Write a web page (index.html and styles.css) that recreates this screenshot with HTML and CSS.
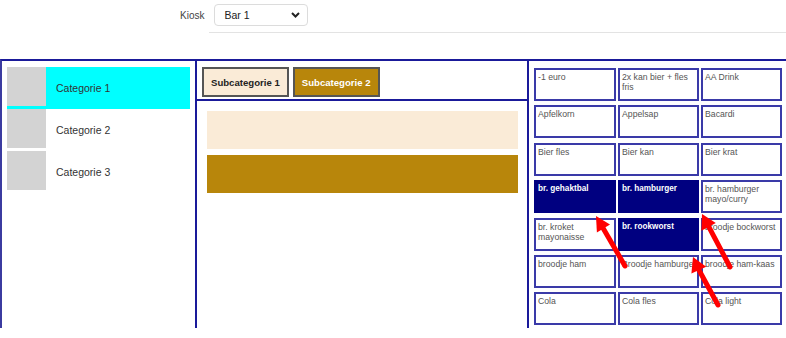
FILE: index.html
```html
<!DOCTYPE html>
<html lang="nl">
<head>
  <meta charset="UTF-8" />
  <title>Kassa</title>
  <link rel="stylesheet" href="styles.css">
</head>
<body>

<div class="topbar">
  <span class="kiosk-label">Kiosk</span>
  <div class="kiosk-select">
    <span>Bar 1</span>
    <svg width="9" height="6" viewBox="0 0 9 6"><path d="M1 1 L4.5 4.5 L8 1" fill="none" stroke="#222" stroke-width="2"/></svg>
  </div>
</div>
<div class="rule"></div>

<main class="frame">
  <aside class="categories">
    <div class="cat active"><div class="thumb"></div><span>Categorie 1</span></div>
    <div class="cat"><div class="thumb"></div><span>Categorie 2</span></div>
    <div class="cat"><div class="thumb"></div><span>Categorie 3</span></div>
  </aside>

  <section class="middle">
    <div class="subbar">
      <button class="sub light">Subcategorie 1</button>
      <button class="sub gold">Subcategorie 2</button>
    </div>
    <div class="strips">
      <div class="strip light"></div>
      <div class="strip gold"></div>
    </div>
  </section>

  <section class="products">
    <div class="grid">
      <div class="item">-1 euro</div>
      <div class="item">2x kan bier + fles fris</div>
      <div class="item">AA Drink</div>
      <div class="item">Apfelkorn</div>
      <div class="item">Appelsap</div>
      <div class="item">Bacardi</div>
      <div class="item">Bier fles</div>
      <div class="item">Bier kan</div>
      <div class="item">Bier krat</div>
      <div class="item sel">br. gehaktbal</div>
      <div class="item sel">br. hamburger</div>
      <div class="item">br. hamburger mayo/curry</div>
      <div class="item">br. kroket mayonaisse</div>
      <div class="item sel">br. rookworst</div>
      <div class="item">broodje bockworst</div>
      <div class="item">broodje ham</div>
      <div class="item">Broodje hamburger</div>
      <div class="item">broodje ham-kaas</div>
      <div class="item">Cola</div>
      <div class="item">Cola fles</div>
      <div class="item">Cola light</div>
    </div>
  </section>
</main>

<!-- annotation arrows on top of the screenshot -->
<svg class="arrows" width="786" height="338" viewBox="0 0 786 338">
  <g stroke="#ff0000" stroke-width="5" stroke-linecap="round">
    <line x1="625" y1="266" x2="603" y2="228"/>
    <line x1="730" y1="267" x2="708.6" y2="226.4"/>
    <line x1="718" y1="305" x2="698.8" y2="269.7"/>
  </g>
  <g fill="#ff0000">
    <polygon points="596,216 610,224.6 596.9,232.6"/>
    <polygon points="702,214 715.8,223.1 701.4,230.7"/>
    <polygon points="693,257 706.2,266.8 691.4,273.6"/>
  </g>
</svg>

</body>
</html>
```

FILE: styles.css
```css
body {
  margin: 0;
  font-family: "Liberation Sans", Arial, sans-serif;
  background: #ffffff;
  color: #333;
  width: 786px;
  height: 338px;
  overflow: hidden;
  position: relative;
}
.topbar {
  display: flex;
  align-items: center;
  gap: 10px;
  padding: 4px 0 0 180px;
}
.kiosk-label {
  font-size: 10px;
  color: #444;
}
.kiosk-select {
  width: 94px;
  height: 22px;
  box-sizing: border-box;
  border: 1px solid #dcdcdc;
  border-radius: 4px;
  display: flex;
  align-items: center;
  justify-content: space-between;
  padding: 0 7px 0 9px;
  font-size: 10.5px;
  color: #222;
}
.rule {
  margin: 6px 0 0 209px;
  height: 1px;
  background: #e3e3e3;
}
.frame {
  margin-top: 26px;
  height: 269px;
  box-sizing: border-box;
  border-top: 2px solid #1a1a9a;
  border-left: 2px solid #3b3ba0;
  display: grid;
  grid-template-columns: 193px 334px 1fr;
  overflow: hidden;
}
.categories {
  padding: 6px 5px 0 5px;
}
.cat {
  height: 42px;
  display: flex;
  align-items: flex-start;
  font-size: 10.5px;
  color: #333;
}
.cat span {
  align-self: center;
  padding-left: 10px;
}
.cat.active {
  background: #00ffff;
}
.thumb {
  width: 39px;
  height: 39px;
  background: #d3d3d3;
}
.middle {
  border-left: 2px solid #1a1a9a;
  border-right: 2px solid #1a1a9a;
}
.subbar {
  height: 40px;
  box-sizing: border-box;
  padding: 6px 5px 0 5px;
  border-bottom: 2px solid #1a1a9a;
  display: flex;
  gap: 4px;
  align-items: flex-start;
}
.sub {
  height: 30px;
  padding: 0 7px;
  border: 2px solid #555;
  font-family: "Liberation Sans", Arial, sans-serif;
  font-weight: bold;
  font-size: 9.6px;
  color: #222;
}
.sub.light {
  background: #faebd7;
}
.sub.gold {
  background: #b8860b;
  color: #ffffff;
}
.strips {
  padding: 10px 9px 0 10px;
  display: flex;
  flex-direction: column;
  gap: 6px;
}
.strip {
  height: 38px;
}
.strip.light {
  background: #faebd7;
}
.strip.gold {
  background: #b8860b;
}
.products {
  padding: 7px 0 0 5px;
}
.grid {
  display: grid;
  grid-template-columns: 82px 81px 81px;
  grid-auto-rows: 33px;
  column-gap: 2px;
  row-gap: 4.4px;
}
.item {
  box-sizing: border-box;
  border: 2px solid #3a3aa8;
  padding: 2px 0 0 2px;
  font-size: 8.7px;
  line-height: 10px;
  color: #555;
  overflow: hidden;
}
.item.sel {
  background: #000080;
  border-color: #000080;
  color: #ffffff;
  font-weight: bold;
  font-size: 8.2px;
}
.arrows {
  position: absolute;
  top: 0;
  left: 0;
  pointer-events: none;
}
```
